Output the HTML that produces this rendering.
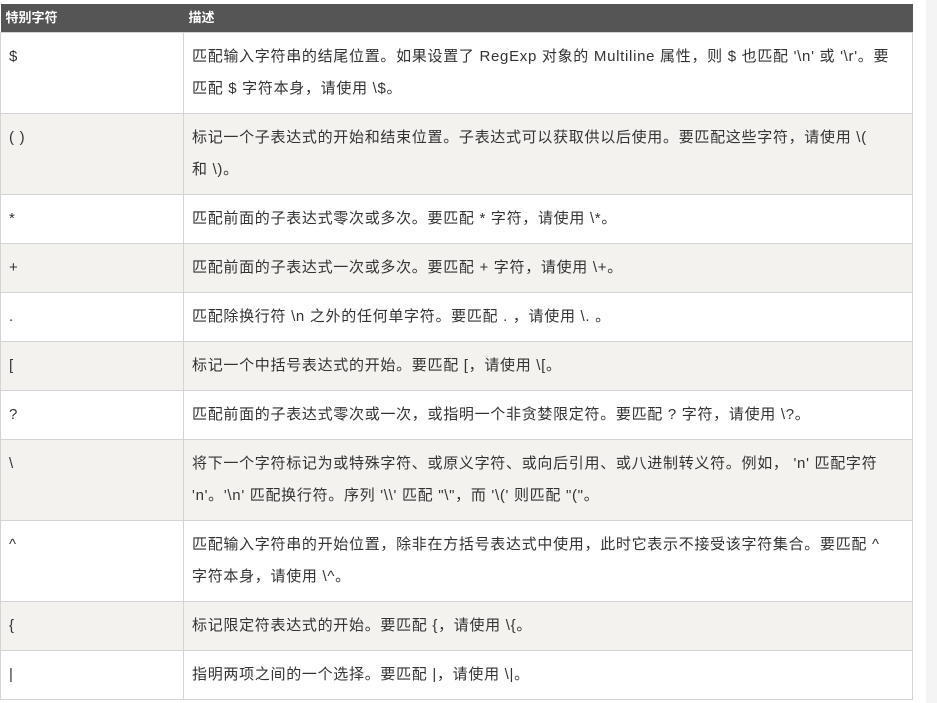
<!DOCTYPE html>
<html><head><meta charset="utf-8"><style>
body{margin:0;background:#fff;width:937px;height:703px;overflow:hidden;position:relative;font-family:"Liberation Sans","Noto Sans CJK SC",sans-serif;}
.sb{position:absolute;left:926px;top:0;width:11px;height:703px;background:#f4f4f4}
table{position:absolute;left:0;top:4px;width:913px;border-collapse:collapse;font-size:15px;color:#333}
th{background:#555;color:#fff;font-size:13px;font-weight:bold;text-align:left;height:28px;padding:0 5px;line-height:28px}
td{border:1px solid #d4d4d4;padding:8px 8px;line-height:32px;height:32px;vertical-align:top;white-space:nowrap;letter-spacing:0.7px}
tr:nth-child(odd) td{background:#f3f2ef}
td:first-child{width:166px}
</style></head><body>
<div class="sb"></div>
<table>
<tr><th style="width:173px">特别字符</th><th>描述</th></tr>
<tr><td>$</td><td>匹配输入字符串的结尾位置。如果设置了 RegExp 对象的 Multiline 属性，则 $ 也匹配 '\n' 或 '\r'。要<br>匹配 $ 字符本身，请使用 \$。</td></tr>
<tr><td>( )</td><td>标记一个子表达式的开始和结束位置。子表达式可以获取供以后使用。要匹配这些字符，请使用 \(<br>和 \)。</td></tr>
<tr><td>*</td><td>匹配前面的子表达式零次或多次。要匹配 * 字符，请使用 \*。</td></tr>
<tr><td>+</td><td>匹配前面的子表达式一次或多次。要匹配 + 字符，请使用 \+。</td></tr>
<tr><td>.</td><td>匹配除换行符 \n 之外的任何单字符。要匹配 . ，请使用 \. 。</td></tr>
<tr><td>[</td><td>标记一个中括号表达式的开始。要匹配 [，请使用 \[。</td></tr>
<tr><td>?</td><td>匹配前面的子表达式零次或一次，或指明一个非贪婪限定符。要匹配 ? 字符，请使用 \?。</td></tr>
<tr><td>\</td><td>将下一个字符标记为或特殊字符、或原义字符、或向后引用、或八进制转义符。例如， 'n' 匹配字符<br>'n'。'\n' 匹配换行符。序列 '\\' 匹配 "\"，而 '\(' 则匹配 "("。</td></tr>
<tr><td>^</td><td>匹配输入字符串的开始位置，除非在方括号表达式中使用，此时它表示不接受该字符集合。要匹配 ^<br>字符本身，请使用 \^。</td></tr>
<tr><td>{</td><td>标记限定符表达式的开始。要匹配 {，请使用 \{。</td></tr>
<tr><td>|</td><td>指明两项之间的一个选择。要匹配 |，请使用 \|。</td></tr>
</table>
</body></html>
